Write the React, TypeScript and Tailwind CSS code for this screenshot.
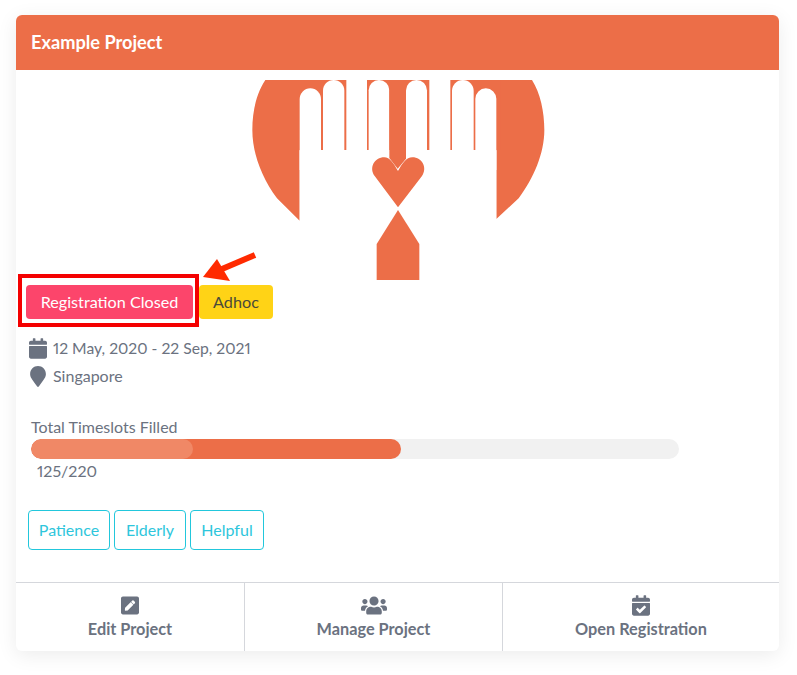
import { FaCalendar, FaMapMarker, FaPenSquare, FaUsers, FaCalendarCheck } from "react-icons/fa";

function Logo() {
  const round = (l: number, r: number, top: number) => {
    const rad = (r - l) / 2;
    return `M${l} 300V${top + rad}A${rad} ${rad} 0 0 1 ${r} ${top + rad}V300Z`;
  };
  return (
    <svg viewBox="-13 30 972 600" className="block w-[324px] h-[200px]">
      <path d="M75 30C48 70 36 125 36 180C36 250 65 325 110 385L178 452V30ZM875 30C900 70 912 125 912 180C912 250 880 325 835 385L768 447V30Z" fill="#ec6e48" />
      <rect x="170" y="30" width="610" height="210" fill="#ec6e48" />
      <path d={round(178, 242, 55)} fill="#fff" />
      <path d={round(248, 312, 30)} fill="#fff" />
      <rect x="318" y="30" width="62" height="270" fill="#fff" />
      <path d={round(385, 447, 30)} fill="#fff" />
      <path d={round(497, 560, 30)} fill="#fff" />
      <rect x="567" y="30" width="63" height="270" fill="#fff" />
      <path d={round(635, 700, 30)} fill="#fff" />
      <path d={round(705, 768, 55)} fill="#fff" />
      <rect x="178" y="241" width="590" height="240" fill="#fff" />
      <path d="M447 30H497V266L472 296L447 264Z" fill="#ec6e48" />
      <path d="M473 412L403 318C385 294 402 262 432 262C448 262 460 280 473 303C486 280 498 262 516 262C546 262 562 294 545 318Z" fill="#ec6e48" />
      <path d="M473 420L537 522V630H409V522Z" fill="#ec6e48" />
    </svg>
  );
}

function Action({ icon, label, className }: { icon: React.ReactNode; label: string; className: string }) {
  return (
    <div className={`flex flex-col items-center pt-[11px] ${className}`}>
      <div className="h-[23px] flex items-center justify-center text-[#6b7280]">{icon}</div>
      <div className="text-[16.3px] leading-[24px] font-bold text-[#6b7280]">{label}</div>
    </div>
  );
}

export default function App() {
  return (
    <div className="w-[797px] h-[675px] bg-white pt-[15px] px-[16px] font-['Lato','Liberation_Sans',sans-serif] text-[#6b7280] [font-variant-numeric:proportional-nums]">
      <div className="w-[763px] h-[636px] rounded-[6px] bg-white shadow-[0_4px_20px_rgba(0,0,0,0.08)] overflow-hidden flex flex-col">
        <div className="h-[55px] shrink-0 bg-[#ec6e48] px-[15px] flex items-center text-white text-[18.2px] font-bold">Example Project</div>
        <div className="flex justify-center pt-[10px]"><Logo /></div>

        <div className="relative flex gap-[6px] pl-[10px] pt-[5px]">
          <span className="w-[167px] h-[34px] rounded-[4px] bg-[#fc456b] text-white text-[16.2px] flex items-center justify-center">Registration Closed</span>
          <span className="w-[74px] h-[34px] rounded-[4px] bg-[#ffd316] text-[#4a4a3a] text-[16.2px] flex items-center justify-center">Adhoc</span>
          <div className="absolute left-[2px] top-[-6px] w-[181px] h-[53px] border-[4px] border-[#f40000]" />
          <svg className="absolute left-[184px] top-[-30px] w-[60px] h-[36px]" viewBox="0 0 60 36">
            <path d="M55 5L22 19" stroke="#ff2a00" strokeWidth="6" />
            <path d="M3 27L17 9L30 31Z" fill="#ff2a00" />
          </svg>
        </div>

        <div className="pl-[13px] pt-[15px] text-[16px] leading-[28px]">
          <div className="flex items-center h-[28px]">
            <FaCalendar className="w-[18px] h-[21px] mr-[6px]" />
            <span className="text-[15.7px]">12 May, 2020 - 22 Sep, 2021</span>
          </div>
          <div className="flex items-center h-[28px]">
            <FaMapMarker className="w-[18px] h-[21px] mr-[6px]" />
            <span>Singapore</span>
          </div>
        </div>

        <div className="pl-[15px] pt-[25px]">
          <div className="text-[16px] leading-[24px] h-[24px]">Total Timeslots Filled</div>
          <div className="w-[648px] h-[20px] rounded-full bg-[#f1f1f1] overflow-hidden">
            <div className="w-[370px] h-full rounded-full bg-[#ec6e48] overflow-hidden">
              <div className="w-[162px] h-full rounded-full bg-[#f08866]" />
            </div>
          </div>
          <div className="pl-[6px] text-[16px] leading-[24px]">125/220</div>
        </div>

        <div className="flex gap-[4px] pl-[12px] pt-[27px] text-[16px] text-[#2ec6dc]">
          <span className="w-[82px] h-[40px] rounded-[4px] border border-[#22c7dc] flex items-center justify-center">Patience</span>
          <span className="w-[72px] h-[40px] rounded-[4px] border border-[#22c7dc] flex items-center justify-center">Elderly</span>
          <span className="w-[74px] h-[40px] rounded-[4px] border border-[#22c7dc] flex items-center justify-center">Helpful</span>
        </div>

        <div className="mt-[32px] flex flex-1 border-t border-[#d5d7dc]">
          <Action className="w-[228px]" label="Edit Project" icon={<FaPenSquare className="w-[18px] h-[21px]" />} />
          <Action className="w-[258px] border-l border-[#d5d7dc]" label="Manage Project" icon={<FaUsers className="w-[26px] h-[21px]" />} />
          <Action className="flex-1 border-l border-[#d5d7dc]" label="Open Registration" icon={<FaCalendarCheck className="w-[18px] h-[21px]" />} />
        </div>
      </div>
    </div>
  );
}
